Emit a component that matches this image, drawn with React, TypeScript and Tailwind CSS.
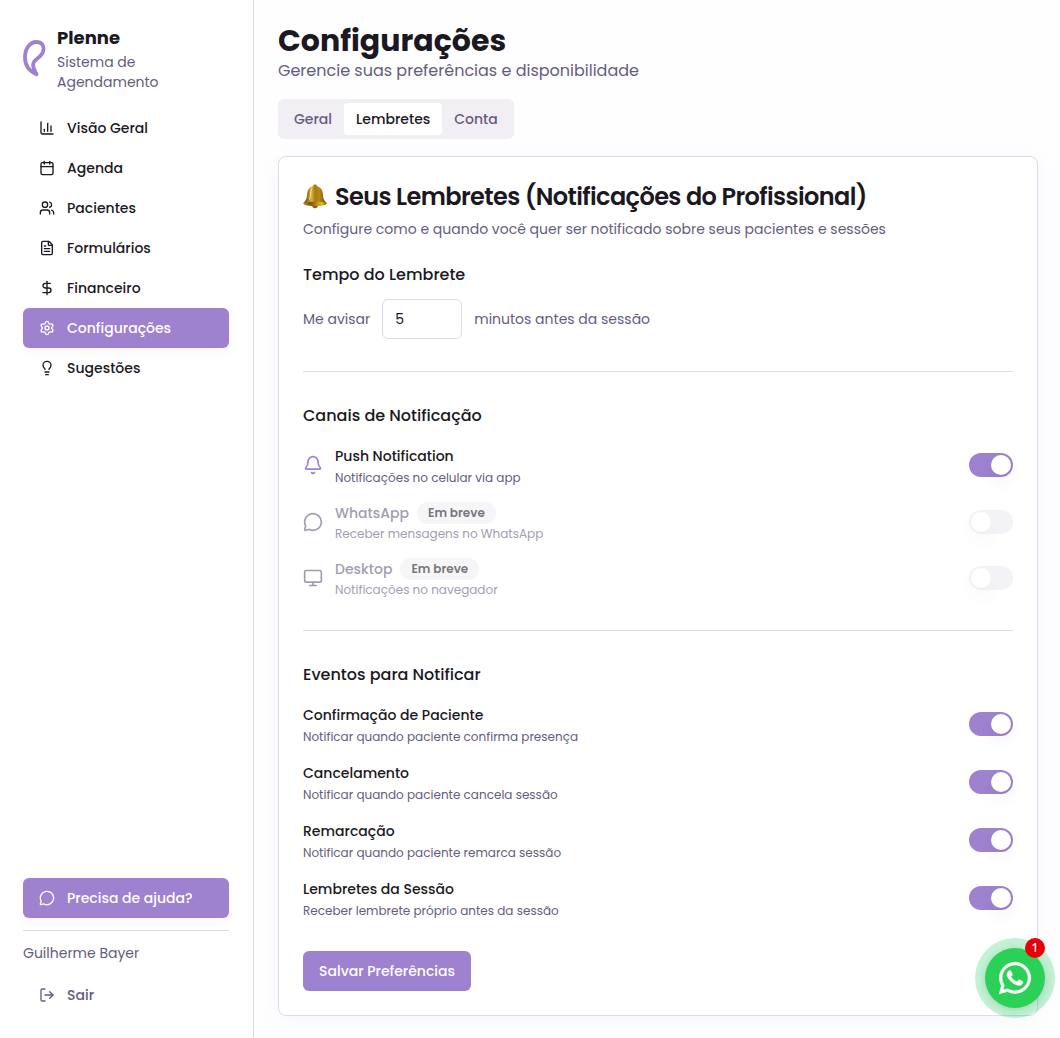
import React, { useState } from 'react';
import {
  Bell,
  Calendar,
  ChartColumn,
  DollarSign,
  FileText,
  Lightbulb,
  LogOut,
  MessageCircle,
  Monitor,
  Settings,
  Users,
} from 'lucide-react';
import { FaWhatsapp } from 'react-icons/fa';

interface SwitchProps {
  id: string;
  checked: boolean;
  disabled?: boolean;
  onChange?: () => void;
}

const Switch: React.FC<SwitchProps> = ({ id, checked, disabled, onChange }) => (
  <input
    id={id}
    type="checkbox"
    role="switch"
    checked={checked}
    disabled={disabled}
    onChange={() => onChange?.()}
    className="relative h-6 w-11 shrink-0 cursor-pointer appearance-none rounded-full bg-[#e9e7ee] transition-colors before:absolute before:top-0.5 before:left-0.5 before:h-5 before:w-5 before:rounded-full before:bg-white before:shadow-[0_8px_16px_rgba(0,0,0,0.05)] before:transition-transform checked:bg-[#9e81cf] checked:before:translate-x-5 disabled:cursor-not-allowed disabled:opacity-50"
  />
);

const Logo = () => (
  <svg width="24" height="38" viewBox="0 0 24 38" fill="none" className="shrink-0">
    <path
      d="M13.600 35.300C6 32 2 25.500 2 18.500C2 9.500 6.800 3 13.500 3C18 3 20.600 5.600 20.600 9.600C20.600 14.500 17.300 17.600 13.800 20C9.600 22.900 8.400 26.500 13.600 35.300Z"
      stroke="#9e81cf"
      strokeWidth="3.800"
      strokeLinejoin="round"
    />
  </svg>
);

const GoldenBell = () => (
  <svg width="24" height="26" viewBox="0 0 24 26" className="shrink-0" aria-hidden="true">
    <defs>
      <linearGradient id="bell-body" x1="0" x2="1" y1="0" y2="0">
        <stop offset="0.1" stopColor="#7d560c" />
        <stop offset="0.35" stopColor="#dcb13a" />
        <stop offset="0.5" stopColor="#a87b14" />
        <stop offset="0.7" stopColor="#b5871a" />
        <stop offset="1" stopColor="#6d4706" />
      </linearGradient>
      <linearGradient id="bell-rim" x1="0" x2="1" y1="0" y2="0">
        <stop offset="0" stopColor="#b98a1d" />
        <stop offset="0.3" stopColor="#7c520b" />
        <stop offset="0.8" stopColor="#edbd22" />
        <stop offset="1" stopColor="#8a5e08" />
      </linearGradient>
    </defs>
    <circle cx="12" cy="21.500" r="2.800" fill="#8f6110" />
    <path
      d="M12 0.500C10.600 0.500 10 1.200 9.800 2.200C6.200 3.200 4.300 6 4.100 10C3.900 14 3.300 16 0.500 19C0 20.500 4 21.800 12 21.800C20 21.800 24 20.500 23.500 19C20.700 16 20.100 14 19.900 10C19.700 6 17.800 3.200 14.200 2.200C14 1.200 13.400 0.500 12 0.500Z"
      fill="url(#bell-body)"
    />
    <path d="M0.500 19C4 17.200 20 17.200 23.500 19C24 21 19 22 12 22C5 22 0 21 0.500 19Z" fill="url(#bell-rim)" />
    <path d="M8.800 4.500C7.200 8 7.800 12 6.500 15.500" stroke="#ffe98c" strokeWidth="1" fill="none" />
  </svg>
);

const navItems = [
  { icon: ChartColumn, label: 'Visão Geral' },
  { icon: Calendar, label: 'Agenda' },
  { icon: Users, label: 'Pacientes' },
  { icon: FileText, label: 'Formulários' },
  { icon: DollarSign, label: 'Financeiro' },
  { icon: Settings, label: 'Configurações', active: true },
  { icon: Lightbulb, label: 'Sugestões' },
];

const Sidebar = () => (
  <aside className="sticky top-0 flex h-screen w-[254px] shrink-0 flex-col border-r border-[#dedae6] bg-white pt-6 pr-6 pb-[23px] pl-[23px]">
    <div className="mb-4 flex items-center gap-[10px]">
      <Logo />
      <div>
        <div className="text-lg leading-7 font-bold">Plenne</div>
        <p className="text-sm text-[#655c7d]">Sistema de Agendamento</p>
      </div>
    </div>

    <nav className="flex-1">
      <ul>
        {navItems.map((item) => (
          <li key={item.label}>
            <a
              href="#"
              className={`flex h-10 items-center gap-3 rounded-md px-4 text-sm font-medium ${
                item.active ? 'bg-[#9e81cf] text-white shadow-[0_4px_10px_rgba(158,129,207,0.08)]' : 'hover:bg-[#f1eef4]'
              }`}
            >
              <item.icon className="h-4 w-4" />
              {item.label}
            </a>
          </li>
        ))}
      </ul>
    </nav>

    <button className="mb-3 flex h-10 items-center gap-3 rounded-md bg-[#9e81cf] px-4 text-sm font-medium text-white shadow-[0_4px_10px_rgba(158,129,207,0.08)]">
      <MessageCircle className="h-4 w-4" />
      Precisa de ajuda?
    </button>
    <div className="border-t border-[#dedae6] pt-3 text-[#655c7d]">
      <p className="mb-3 text-sm">Guilherme Bayer</p>
      <button className="flex h-10 w-full items-center gap-3 rounded-md px-4 text-sm font-medium">
        <LogOut className="h-4 w-4" />
        Sair
      </button>
    </div>
  </aside>
);

const tabs = ['Geral', 'Lembretes', 'Conta'];

const channels = [
  { id: 'push', icon: Bell, title: 'Push Notification', description: 'Notificações no celular via app' },
  { id: 'whatsapp', icon: MessageCircle, title: 'WhatsApp', description: 'Receber mensagens no WhatsApp', soon: true },
  { id: 'desktop', icon: Monitor, title: 'Desktop', description: 'Notificações no navegador', soon: true },
];

const events = [
  { id: 'confirmacao', title: 'Confirmação de Paciente', description: 'Notificar quando paciente confirma presença' },
  { id: 'cancelamento', title: 'Cancelamento', description: 'Notificar quando paciente cancela sessão' },
  { id: 'remarcacao', title: 'Remarcação', description: 'Notificar quando paciente remarca sessão' },
  { id: 'lembretes', title: 'Lembretes da Sessão', description: 'Receber lembrete próprio antes da sessão' },
];

const App: React.FC = () => {
  const [activeTab, setActiveTab] = useState('Lembretes');
  const [minutes, setMinutes] = useState('5');
  const [enabled, setEnabled] = useState<Record<string, boolean>>({
    push: true,
    confirmacao: true,
    cancelamento: true,
    remarcacao: true,
    lembretes: true,
  });

  const toggle = (id: string) => setEnabled((prev) => ({ ...prev, [id]: !prev[id] }));

  return (
    <div className="flex min-h-screen bg-[#fefeff] font-[Poppins,Inter,sans-serif] text-[#1b1822]">
      <Sidebar />

      <main className="min-w-0 flex-1 pt-[23px] pr-[22px] pb-[22px] pl-6">
        <header className="mb-4">
          <h1 className="text-3xl leading-9 font-bold">Configurações</h1>
          <p className="text-base text-[#655c7d]">Gerencie suas preferências e disponibilidade</p>
        </header>

        <div role="tablist" className="mb-[17px] flex h-10 w-fit items-center rounded-md bg-[#f1eef4] p-1">
          {tabs.map((tab) => (
            <button
              key={tab}
              role="tab"
              aria-selected={activeTab === tab}
              onClick={() => setActiveTab(tab)}
              className={`h-8 rounded-sm px-3 text-sm font-medium ${
                activeTab === tab ? 'bg-white text-[#1b1822]' : 'text-[#655c7d]'
              }`}
            >
              {tab}
            </button>
          ))}
        </div>

        <section className="rounded-lg border border-[#dedae6] bg-white p-6 shadow-[0_4px_20px_rgba(158,129,207,0.08)]">
          <h2 className="flex items-center gap-2 text-2xl leading-8 font-semibold tracking-tight">
            <GoldenBell />
            Seus Lembretes (Notificações do Profissional)
          </h2>
          <p className="mt-1.5 text-sm text-[#655c7d]">
            Configure como e quando você quer ser notificado sobre seus pacientes e sessões
          </p>

          {/* Tempo do lembrete */}
          <h3 className="mt-6 text-base font-medium">Tempo do Lembrete</h3>
          <div className="mt-3 flex items-center gap-3 text-sm text-[#655c7d]">
            <label htmlFor="minutes">Me avisar</label>
            <input
              id="minutes"
              value={minutes}
              onChange={(e) => setMinutes(e.target.value)}
              className="h-10 w-20 rounded-md border border-[#dedae6] bg-white px-3 text-sm text-[#1b1822]"
            />
            <span>minutos antes da sessão</span>
          </div>

          <hr className="my-8 border-[#dedae6]" />

          {/* Canais */}
          <h3 className="text-base font-medium">Canais de Notificação</h3>
          <div className="mt-4 space-y-4">
            {channels.map((channel) => (
              <div key={channel.id} className="flex items-center justify-between">
                <div className={`flex items-center gap-3 ${channel.soon ? 'opacity-60' : ''}`}>
                  <channel.icon className={`h-5 w-5 ${channel.soon ? 'text-[#655c7d]' : 'text-[#9e81cf]'}`} />
                  <div>
                    {channel.soon ? (
                      <div className="flex h-[22px] items-center gap-2">
                        <label htmlFor={channel.id} className="text-sm font-medium text-[#655c7d]">
                          {channel.title}
                        </label>
                        <span className="rounded-full bg-[#f1f1f4] px-[11px] py-[3px] text-xs font-semibold">Em breve</span>
                      </div>
                    ) : (
                      <label htmlFor={channel.id} className="block text-sm leading-6 font-medium">
                        {channel.title}
                      </label>
                    )}
                    <p className="mt-0.5 text-xs text-[#655c7d]">{channel.description}</p>
                  </div>
                </div>
                <Switch
                  id={channel.id}
                  checked={!!enabled[channel.id]}
                  disabled={channel.soon}
                  onChange={() => toggle(channel.id)}
                />
              </div>
            ))}
          </div>

          <hr className="my-8 border-[#dedae6]" />

          {/* Eventos */}
          <h3 className="text-base font-medium">Eventos para Notificar</h3>
          <div className="mt-4 space-y-4">
            {events.map((event) => (
              <div key={event.id} className="flex items-center justify-between">
                <div>
                  <label htmlFor={event.id} className="block text-sm leading-6 font-medium">
                    {event.title}
                  </label>
                  <p className="mt-0.5 text-xs text-[#655c7d]">{event.description}</p>
                </div>
                <Switch id={event.id} checked={enabled[event.id]} onChange={() => toggle(event.id)} />
              </div>
            ))}
          </div>

          <button className="mt-8 h-10 rounded-md bg-[#9e81cf] px-4 text-sm font-medium text-white">
            Salvar Preferências
          </button>
        </section>
      </main>

      {/* WhatsApp */}
      <a
        href="#"
        aria-label="WhatsApp"
        className="fixed right-[15px] bottom-[30px] flex h-[60px] w-[60px] items-center justify-center rounded-full bg-[#2bd157] text-white shadow-[0_2px_10px_rgba(0,0,0,0.15),0_0_0_10px_rgba(37,211,102,0.28)]"
      >
        <FaWhatsapp className="h-9 w-9" stroke="currentColor" strokeWidth="8" />
        <span className="absolute -top-[10px] right-0 flex h-5 w-5 items-center justify-center rounded-full bg-[#e7000b] font-['Open_Sans',sans-serif] text-xs font-semibold">
          1
        </span>
      </a>
    </div>
  );
};

export default App;
